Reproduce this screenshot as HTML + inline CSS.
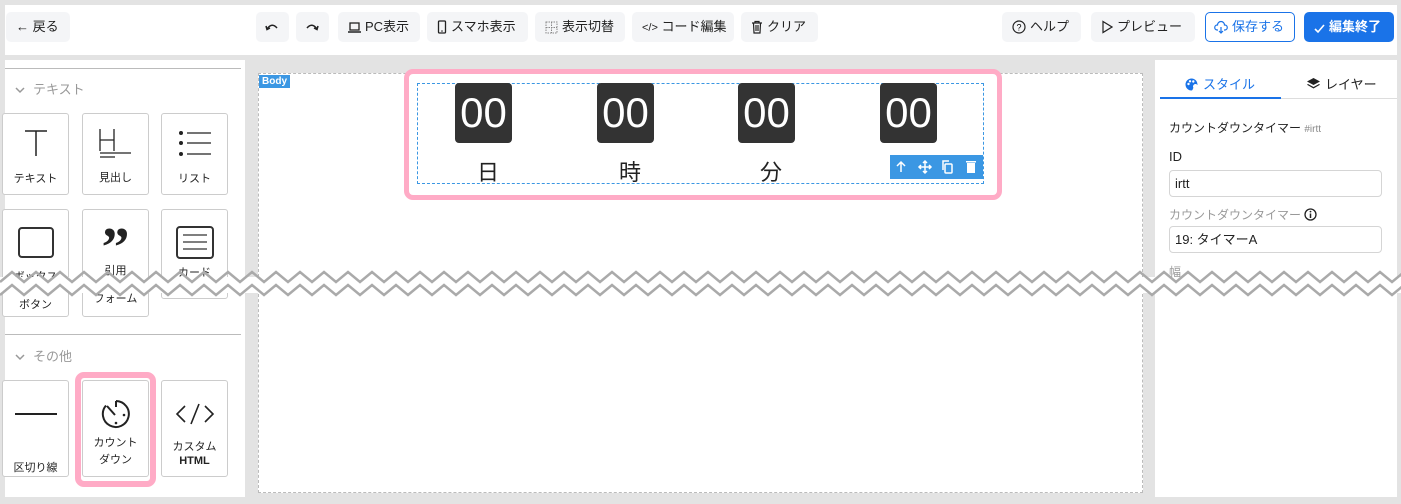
<!DOCTYPE html>
<html><head><meta charset="utf-8"><style>
*{box-sizing:border-box;margin:0;padding:0}
body{width:1401px;height:504px;background:#e3e3e3;font-family:"Liberation Sans","Noto Sans CJK JP",sans-serif;position:relative;overflow:hidden;color:#222}
.a{position:absolute}
.bar{left:5px;top:5px;width:1392px;height:50px;background:#fff}
.btn{position:absolute;top:12px;height:30px;background:#f4f5f7;border-radius:5px;font-size:13px;line-height:30px;color:#222;padding:0 10px;white-space:nowrap}
.btn svg{vertical-align:-3px;margin-right:4px}
.tile{position:absolute;width:67px;background:#fff;border:1px solid #ccc;border-radius:3px;font-size:11px;text-align:center;color:#222}
.tile svg{display:block;margin:0 auto}
.dg{position:absolute;top:83px;width:57px;height:60px;background:#333;border-radius:4px;color:#fff;font-size:42px;line-height:60px;text-align:center;font-family:"Liberation Sans",sans-serif}
.lb{position:absolute;top:155px;font-size:22px;width:60px;text-align:center;color:#222}
.inp{position:absolute;left:1169px;width:213px;height:27px;border:1px solid #d5d5d5;border-radius:4px;font-size:13px;line-height:25px;padding-left:5px}
</style></head><body>
<div class="a bar"></div>
<div class="btn" style="left:6px;width:64px">← 戻る</div>
<div class="btn" style="left:256px;width:33px;padding:0 0 0 9px"><svg width="14" height="14" viewBox="0 0 14 14"><path d="M2 9 Q7 2 12 8" fill="none" stroke="#222" stroke-width="1.5"/><path d="M1 6 L2 9.5 L5 8" fill="none" stroke="#222" stroke-width="1.5"/></svg></div>
<div class="btn" style="left:296px;width:33px;padding:0 0 0 9px"><svg width="14" height="14" viewBox="0 0 14 14"><path d="M12 9 Q7 2 2 8" fill="none" stroke="#222" stroke-width="1.5"/><path d="M13 6 L12 9.5 L9 8" fill="none" stroke="#222" stroke-width="1.5"/></svg></div>
<div class="btn" style="left:338px;width:82px"><svg width="13" height="13" viewBox="0 0 13 13"><rect x="2" y="2" width="9" height="7" fill="none" stroke="#222" stroke-width="1.3"/><path d="M0 11H13" stroke="#222" stroke-width="1.5"/></svg>PC表示</div>
<div class="btn" style="left:427px;width:101px"><svg width="10" height="14" viewBox="0 0 10 14"><rect x="1.5" y="1" width="7" height="12" rx="1" fill="none" stroke="#222" stroke-width="1.3"/><circle cx="5" cy="11" r=".8" fill="#222"/></svg>スマホ表示</div>
<div class="btn" style="left:535px;width:90px"><svg width="13" height="13" viewBox="0 0 13 13"><rect x="1" y="1" width="11" height="11" fill="none" stroke="#888" stroke-dasharray="1.5 1"/><path d="M1 6.5H12M6.5 1V12" stroke="#888" stroke-dasharray="1.5 1"/></svg>表示切替</div>
<div class="btn" style="left:632px;width:102px"><span style="font-size:11px">&lt;/&gt;</span> コード編集</div>
<div class="btn" style="left:741px;width:77px"><svg width="12" height="14" viewBox="0 0 12 14"><path d="M1 3H11M4 3V1.5H8V3M2.5 3.5L3 13H9L9.5 3.5M5 5V11M7 5V11" fill="none" stroke="#222" stroke-width="1.2"/></svg>クリア</div>
<div class="btn" style="left:1002px;width:79px"><svg width="14" height="14" viewBox="0 0 14 14"><circle cx="7" cy="7" r="6" fill="none" stroke="#222" stroke-width="1.2"/><text x="7" y="10.5" font-size="9" text-anchor="middle" font-family="Liberation Sans">?</text></svg>ヘルプ</div>
<div class="btn" style="left:1091px;width:104px"><svg width="12" height="14" viewBox="0 0 12 14"><path d="M2 1.5L11 7L2 12.5Z" fill="none" stroke="#222" stroke-width="1.2"/></svg>プレビュー</div>
<div class="btn" style="left:1205px;width:90px;background:#fff;border:1px solid #1a73e8;color:#1a73e8;line-height:28px;padding:0 8px"><svg width="14" height="14" viewBox="0 0 14 14"><path d="M4 10H3A2.5 2.5 0 0 1 3.5 5A3.5 3.5 0 0 1 10.5 5A2.5 2.5 0 0 1 11 10H10M7 7V13M5 11L7 13L9 11" fill="none" stroke="#1a73e8" stroke-width="1.2"/></svg>保存する</div>
<div class="btn" style="left:1304px;width:90px;background:#1a73e8;color:#fff;font-weight:bold"><svg width="11" height="11" viewBox="0 0 11 11"><path d="M1 6L4 9L10 2" fill="none" stroke="#fff" stroke-width="1.6"/></svg>編集終了</div>

<!-- left panel -->
<div class="a" style="left:5px;top:60px;width:240px;height:437px;background:#fff"></div>
<div class="a" style="left:5px;top:68px;width:236px;height:1px;background:#bbb"></div>
<div class="a" style="left:15px;top:79px;font-size:13px;color:#999"><svg width="10" height="8" viewBox="0 0 10 8" style="margin-right:8px"><path d="M1 2L5 6L9 2" fill="none" stroke="#999" stroke-width="1.5"/></svg>テキスト</div>
<div class="tile" style="left:2px;top:113px;height:82px"><svg width="30" height="30" viewBox="0 0 30 30" style="margin-top:14px"><path d="M4 3H26M15 3V28" stroke="#222" stroke-width="1.5"/></svg><div style="margin-top:12px">テキスト</div></div>
<div class="tile" style="left:82px;top:113px;height:82px"><svg width="34" height="34" viewBox="0 0 34 34" style="margin-top:12px"><path d="M1 3V25M15 3V25M1 14H15M1 27H32M1 31H16" stroke="#222" stroke-width="1.3"/></svg><div style="margin-top:9px">見出し</div></div>
<div class="tile" style="left:161px;top:113px;height:82px"><svg width="34" height="30" viewBox="0 0 34 30" style="margin-top:14px"><circle cx="3" cy="5" r="2" fill="#222"/><circle cx="3" cy="15" r="2" fill="#222"/><circle cx="3" cy="26" r="2" fill="#222"/><path d="M9 5H33M9 15H33M9 26H33" stroke="#222" stroke-width="1.3"/></svg><div style="margin-top:12px">リスト</div></div>
<div class="tile" style="left:2px;top:209px;height:108px"><div style="width:36px;height:31px;border:2px solid #333;border-radius:4px;margin:17px auto 0"></div><div style="margin-top:10px">ボックス</div><div style="margin-top:12px">ボタン</div></div>
<div class="tile" style="left:82px;top:209px;height:108px"><div style="font-size:56px;font-weight:bold;line-height:40px;margin-top:18px;font-family:'Liberation Serif',serif;height:30px">”</div><div style="margin-top:4px">引用</div><div style="margin-top:12px">フォーム</div></div>
<div class="tile" style="left:161px;top:209px;height:90px"><svg width="38" height="34" viewBox="0 0 38 34" style="margin-top:16px"><rect x="1" y="1" width="36" height="31" rx="3" fill="none" stroke="#333" stroke-width="2"/><path d="M7 9H31M7 16H31M7 23H31" stroke="#333" stroke-width="1.3"/></svg><div style="margin-top:4px">カード</div></div>
<div class="a" style="left:5px;top:334px;width:236px;height:1px;background:#bbb"></div>
<div class="a" style="left:15px;top:346px;font-size:13px;color:#999"><svg width="10" height="8" viewBox="0 0 10 8" style="margin-right:8px"><path d="M1 2L5 6L9 2" fill="none" stroke="#999" stroke-width="1.5"/></svg>その他</div>
<div class="tile" style="left:2px;top:380px;height:97px"><div style="width:42px;height:2px;background:#222;margin:32px auto 0"></div><div style="margin-top:44px">区切り線</div></div>
<div class="tile" style="left:82px;top:380px;height:97px"><svg width="32" height="32" viewBox="0 0 32 32" style="margin-top:17px"><path d="M16 3A13 13 0 1 1 6 7.5" fill="none" stroke="#222" stroke-width="2"/><path d="M16 3V9M7 8L15 17" stroke="#222" stroke-width="2"/><circle cx="16" cy="25" r="1.3" fill="#222"/><circle cx="24" cy="17" r="1.3" fill="#222"/></svg><div style="margin-top:5px;line-height:17px">カウント<br>ダウン</div></div>
<div class="a" style="left:75px;top:372px;width:81px;height:115px;border:6px solid #ffabc6;border-radius:9px"></div>
<div class="tile" style="left:161px;top:380px;height:97px"><svg width="40" height="24" viewBox="0 0 40 24" style="margin-top:21px"><path d="M10 4L2 12L10 20M30 4L38 12L30 20M24 2L16 22" fill="none" stroke="#222" stroke-width="1.6"/></svg><div style="margin-top:14px;line-height:14px">カスタム<br><b>HTML</b></div></div>

<!-- canvas -->
<div class="a" style="left:258px;top:73px;width:885px;height:420px;background:#fff;border:1px dashed #bbb"></div>
<div class="a" style="left:259px;top:75px;background:#3b97e3;color:#fff;font-size:10px;font-weight:bold;padding:1px 3px">Body</div>
<div class="a" style="left:417px;top:83px;width:567px;height:101px;border:1px dashed #3b97e3"></div>
<div class="dg" style="left:455px">00</div><div class="dg" style="left:597px">00</div><div class="dg" style="left:738px">00</div><div class="dg" style="left:880px">00</div>
<div class="lb" style="left:458px">日</div><div class="lb" style="left:600px">時</div><div class="lb" style="left:741px">分</div>
<div class="a" style="left:890px;top:155px;width:93px;height:24px;background:#3b97e3">
<svg width="93" height="24" viewBox="0 0 93 24"><g fill="none" stroke="#fff" stroke-width="1.5"><path d="M11 17V7M7 11L11 7L15 11"/><path d="M35 6V18M29 12H41M33 8L35 6L37 8M33 16L35 18L37 16M31 10L29 12L31 14M39 10L41 12L39 14"/><rect x="55" y="9" width="7" height="9" rx="1"/><path d="M53 15V6H59"/></g><path d="M77 8H85V18H77Z M76 6H86V7.5H76Z" fill="#fff"/></svg></div>
<div class="a" style="left:404px;top:69px;width:598px;height:131px;border:5px solid #ffabc6;border-radius:9px"></div>

<!-- right panel -->
<div class="a" style="left:1155px;top:60px;width:242px;height:437px;background:#fff"></div>
<div class="a" style="left:1185px;top:74px;font-size:13px;color:#1a73e8"><svg width="13" height="13" viewBox="0 0 13 13" style="vertical-align:-2px;margin-right:5px"><path d="M6.5 0.5A6 6 0 1 0 6.5 12.5C8 12.5 7.5 10.5 8.5 10A2 2 0 0 1 12.5 7A6 6 0 0 0 6.5 0.5Z" fill="#1a73e8"/><circle cx="3.5" cy="6" r="1.2" fill="#fff"/><circle cx="5" cy="3.3" r="1.2" fill="#fff"/><circle cx="8.3" cy="3.5" r="1.2" fill="#fff"/></svg>スタイル</div>
<div class="a" style="left:1307px;top:74px;font-size:13px"><svg width="13" height="12" viewBox="0 0 13 12" style="vertical-align:-1px;margin-right:5px"><path d="M6.5 0L13 3.5L6.5 7L0 3.5Z" fill="#222"/><path d="M1 6L6.5 9L12 6L13 6.8L6.5 10.5L0 6.8Z" fill="#222"/></svg>レイヤー</div>
<div class="a" style="left:1160px;top:97px;width:121px;height:2px;background:#1a73e8"></div>
<div class="a" style="left:1281px;top:98px;width:116px;height:1px;background:#ddd"></div>
<div class="a" style="left:1169px;top:119px;font-size:12px">カウントダウンタイマー <span style="color:#888;font-size:10px">#irtt</span></div>
<div class="a" style="left:1169px;top:149px;font-size:13px">ID</div>
<div class="inp" style="top:170px">irtt</div>
<div class="a" style="left:1169px;top:206px;font-size:12px;color:#999">カウントダウンタイマー <svg width="13" height="13" viewBox="0 0 13 13" style="vertical-align:-2px"><circle cx="6.5" cy="6.5" r="5.5" fill="none" stroke="#222" stroke-width="1.3"/><path d="M6.5 5.5V10" stroke="#222" stroke-width="1.5"/><circle cx="6.5" cy="3.6" r=".9" fill="#222"/></svg></div>
<div class="inp" style="top:226px">19: タイマーA</div>
<div class="a" style="left:1169px;top:263px;font-size:12px;color:#999">幅</div>

<!-- zigzag tear -->
<svg class="a" style="left:0;top:268px" width="1401" height="32">
<rect x="0" y="9" width="1401" height="16" fill="#fff"/>
<polyline id="p1" fill="none" stroke="#aaa" stroke-width="2.5" points=""/>
<polyline id="p2" fill="none" stroke="#aaa" stroke-width="2.5" points=""/>
</svg>
<script>
var a="",b="";for(var x=0,i=0;x<=1416;x+=12,i++){var y=i%2?4:14;a+=x+","+y+" ";b+=x+","+(y+13)+" ";}
document.getElementById("p1").setAttribute("points",a);document.getElementById("p2").setAttribute("points",b);
</script>
</body></html>
